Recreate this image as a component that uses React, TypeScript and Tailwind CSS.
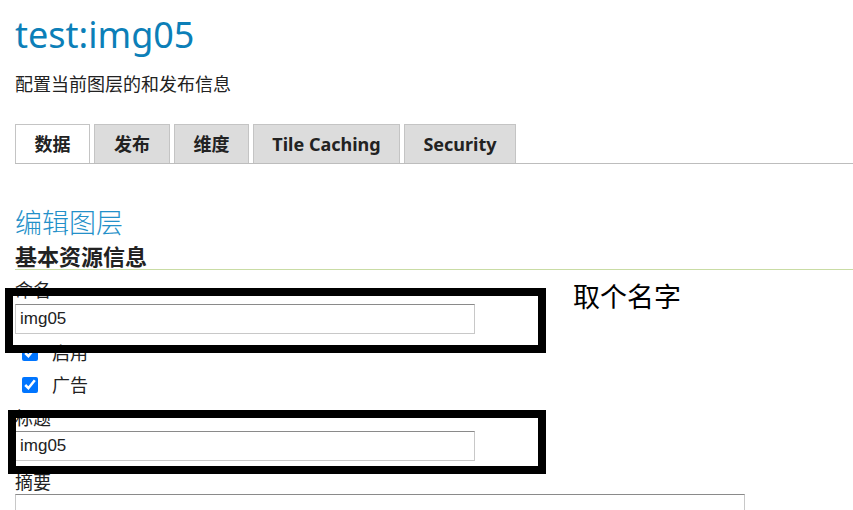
import React from "react"

const FONT = "font-['Noto_Sans','Noto_Sans_CJK_SC',sans-serif]"

const tabs = [
  { label: "数据", active: true, w: "w-[75px]" },
  { label: "发布", active: false, w: "w-[76px]" },
  { label: "维度", active: false, w: "w-[75px]" },
  { label: "Tile Caching", active: false, w: "w-[147px]" },
  { label: "Security", active: false, w: "w-[112px]" },
]

const TextInput = ({ value }: { value: string }) => (
  <input
    readOnly
    value={value}
    className="block w-[460px] h-[30px] px-[4px] border border-[#c8c8c8] border-t-[#8a8a8a] bg-white text-[17px] text-[#222] font-['Liberation_Sans',sans-serif] outline-none"
  />
)

const Check = ({ label }: { label: string }) => (
  <label className="flex items-center h-[24px] pl-[7px] gap-[14px] text-[18px] text-[#222]">
    <input type="checkbox" checked readOnly className="w-4 h-4 m-0 accent-[#0075ff]" />
    <span>{label}</span>
  </label>
)

export default function App() {
  return (
    <div className={`relative w-[853px] h-[510px] overflow-hidden bg-white ${FONT}`}>
      <div className="pl-[15px]">
        {/* Heading */}
        <h1 className="mt-[13px] h-[43px] leading-[43px] text-[36px] text-[#0c7fb8] font-normal">
          test:img05
        </h1>
        <p className="mt-[16px] h-[24px] leading-[24px] text-[18px] text-[#222]">
          配置当前图层的和发布信息
        </p>

        {/* Tabs */}
        <div className="mt-[28px] flex items-end gap-[4px] h-[40px] border-b border-[#bdbdbd]">
          {tabs.map((t) => (
            <div
              key={t.label}
              className={`${t.w} h-[39px] flex items-center justify-center border border-b-0 border-[#c4c4c4] text-[18px] font-bold text-[#222] ${
                t.active ? "bg-white" : "bg-[#dcdcdc]"
              }`}
            >
              {t.label}
            </div>
          ))}
        </div>

        {/* Section titles */}
        <h2 className="mt-[43px] h-[32px] leading-[32px] text-[27px] font-light text-[#2390c9]">
          编辑图层
        </h2>
        <h3 className="mt-[4px] h-[27px] leading-[26px] text-[22px] font-bold text-[#222] border-b border-[#c9dca4]">
          基本资源信息
        </h3>

        {/* Form */}
        <div className="mt-[10px] h-[20px] leading-[20px] text-[18px] text-[#222]">命名</div>
        <div className="mt-[4px]">
          <TextInput value="img05" />
        </div>

        <div className="mt-[7px] flex flex-col gap-[8px]">
          <Check label="启用" />
          <Check label="广告" />
        </div>

        <div className="mt-[11px] h-[20px] leading-[20px] text-[18px] text-[#222]">标题</div>
        <div className="mt-[3px]">
          <TextInput value="img05" />
        </div>

        <div className="mt-[11px] h-[20px] leading-[20px] text-[18px] text-[#222]">摘要</div>
        <div className="mt-[2px] w-[730px] h-[60px] border border-[#c8c8c8] border-t-[#8a8a8a]" />
      </div>

      {/* Annotation boxes */}
      <div className="absolute left-[5px] top-[288px] w-[541px] h-[65px] border-8 border-black" />
      <div className="absolute left-[8px] top-[410px] w-[538px] h-[64px] border-8 border-black" />
      <div className="absolute left-[573px] top-[280px] text-[27px] leading-[34px] text-black">
        取个名字
      </div>
    </div>
  )
}
